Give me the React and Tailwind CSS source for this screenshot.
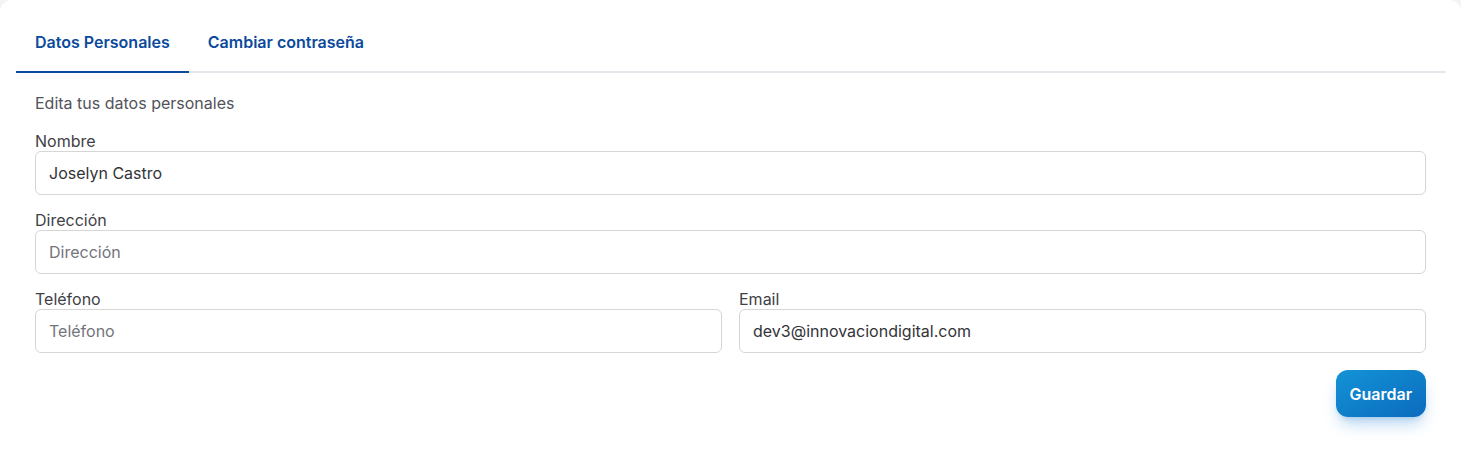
export default function App() {
    const fieldLabel = "block h-5 text-base leading-5 text-[#3f3f46]";
    const fieldInput =
        "w-full h-[44px] rounded-md border border-[#d6d6d6] bg-white px-[13px] text-base text-[#333338] placeholder:text-[#74747c] outline-none";

    return (
        <div className="min-h-[450px] bg-[#f3f4f6] font-['Inter',sans-serif]">
            <div className="min-h-[470px] rounded-xl bg-white pt-3 pl-4 pr-[15px]">
                {/* Tabs */}
                <div className="flex border-b-2 border-[#e6e7ec]">
                    <button className="-mb-[2px] h-[61px] border-b-2 border-[#0b4a9c] px-[19px] text-base font-semibold text-[#0b4a9c]">
                        Datos Personales
                    </button>
                    <button className="-mb-[2px] h-[61px] border-b-2 border-transparent px-[19px] text-base font-semibold text-[#0b4a9c]">
                        Cambiar contraseña
                    </button>
                </div>

                <div className="pl-[19px] pr-[20px] pt-5">
                    <p className="text-base leading-5 text-[#52525b]">Edita tus datos personales</p>

                    <div className="mt-[18px] flex flex-col gap-[15px]">
                        <div>
                            <label className={fieldLabel}>Nombre</label>
                            <input className={fieldInput} defaultValue="Joselyn Castro" />
                        </div>
                        <div>
                            <label className={fieldLabel}>Dirección</label>
                            <input className={fieldInput} placeholder="Dirección" />
                        </div>
                        <div className="grid grid-cols-2 gap-[17px]">
                            <div>
                                <label className={fieldLabel}>Teléfono</label>
                                <input className={fieldInput} placeholder="Teléfono" />
                            </div>
                            <div>
                                <label className={fieldLabel}>Email</label>
                                <input className={fieldInput} defaultValue="dev3@innovaciondigital.com" />
                            </div>
                        </div>
                    </div>

                    <div className="mt-[17px] flex justify-end">
                        <button className="h-[47px] rounded-xl bg-gradient-to-br from-[#1493d6] to-[#0c6bbd] px-[14px] text-base font-semibold text-white shadow-lg shadow-[#1a7fd0]/30">
                            Guardar
                        </button>
                    </div>
                </div>
            </div>
        </div>
    );
}
